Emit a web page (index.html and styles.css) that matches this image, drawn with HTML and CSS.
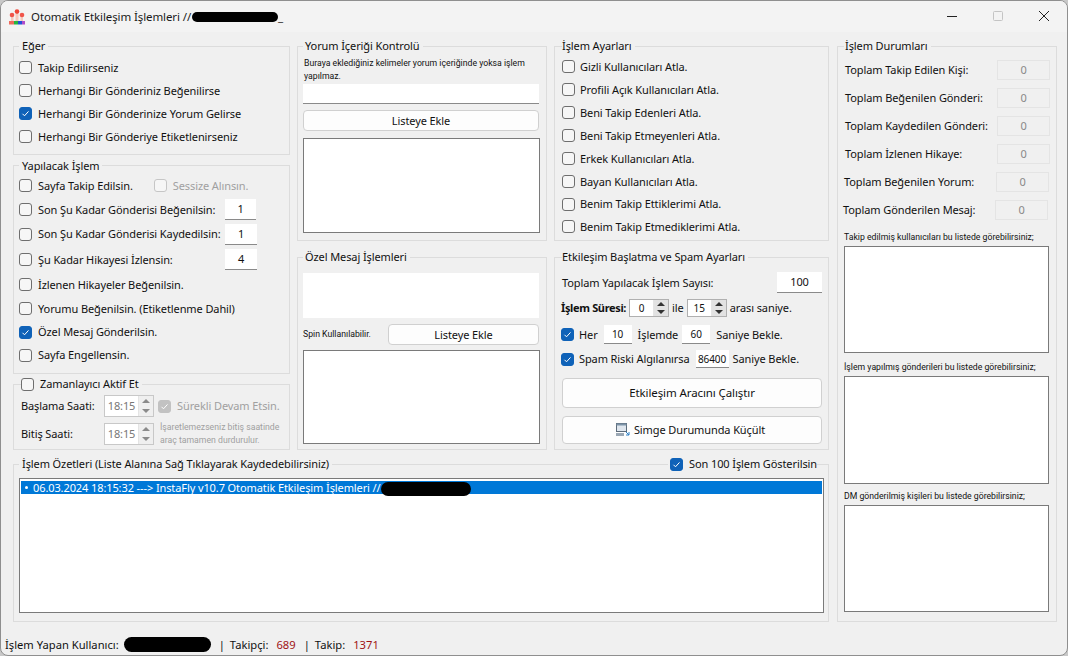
FILE: index.html
```html
<!DOCTYPE html>
<html lang="tr">
<head>
<meta charset="utf-8">
<title>Otomatik Etkileşim İşlemleri</title>
<link rel="stylesheet" href="styles.css">
</head>
<body>
<div class="window">
  <header class="titlebar">
    <svg class="logo" width="16" height="16" viewBox="0 0 16 16"><path d="M2 8h2.5v4H2zM11.5 8H14v4h-2.5zM6.5 5h3v7h-3z" fill="#f6c9bc"/><circle cx="8" cy="2.6" r="2.3" fill="#ee4638"/><circle cx="3" cy="6" r="2.3" fill="#f0554a"/><circle cx="13" cy="6" r="2.3" fill="#f0554a"/><path d="M0 12h5v3.5H0z" fill="#ef6a5c"/><path d="M5 12h4v3.5H5z" fill="#27b53f"/><path d="M9 12h4v3.5H9z" fill="#2450d8"/><path d="M13 12h3v3.5h-3z" fill="#b04bc9"/></svg>
    <span class="title-text">Otomatik Etkileşim İşlemleri //</span><span class="blot blot-title"></span><span class="title-text">_</span>
    <div class="controls">
      <svg class="ctl" width="46" height="32" viewBox="0 0 46 32"><path d="M18 15.5h10" stroke="#222" fill="none"/></svg>
      <svg class="ctl" width="46" height="32" viewBox="0 0 46 32"><rect x="18.5" y="10.5" width="9" height="9" rx="1" stroke="#c4c4c4" fill="none"/></svg>
      <svg class="ctl" width="46" height="32" viewBox="0 0 46 32"><path d="M18 10l10 10M28 10L18 20" stroke="#222" fill="none"/></svg>
    </div>
  </header>

  <main class="content">
    <section class="col">
      <fieldset class="group g-if">
        <legend>Eğer</legend>
        <div class="row h23"><span class="cb"></span>Takip Edilirseniz</div>
        <div class="row h23"><span class="cb"></span>Herhangi Bir Gönderiniz Beğenilirse</div>
        <div class="row h23"><span class="cb on"><svg viewBox="0 0 13 13"><path d="M3.5 6.8l2 2 4-4.4" fill="none" stroke="#fff"/></svg></span>Herhangi Bir Gönderinize Yorum Gelirse</div>
        <div class="row h23"><span class="cb"></span>Herhangi Bir Gönderiye Etiketlenirseniz</div>
      </fieldset>
      <fieldset class="group g-do">
        <legend>Yapılacak İşlem</legend>
        <div class="row h24"><span class="cb"></span>Sayfa Takip Edilsin.<span class="cb off quiet"></span><span class="muted">Sessize Alınsın.</span></div>
        <div class="row h24"><span class="cb"></span>Son Şu Kadar Gönderisi Beğenilsin:<span class="field n1">1</span></div>
        <div class="row h25"><span class="cb"></span>Son Şu Kadar Gönderisi Kaydedilsin:<span class="field n1 wide">1</span></div>
        <div class="row h26"><span class="cb"></span>Şu Kadar Hikayesi İzlensin:<span class="field n1 wide">4</span></div>
        <div class="row h24"><span class="cb"></span>İzlenen Hikayeler Beğenilsin.</div>
        <div class="row h24"><span class="cb"></span>Yorumu Beğenilsin. (Etiketlenme Dahil)</div>
        <div class="row h23"><span class="cb on"><svg viewBox="0 0 13 13"><path d="M3.5 6.8l2 2 4-4.4" fill="none" stroke="#fff"/></svg></span>Özel Mesaj Gönderilsin.</div>
        <div class="row h23"><span class="cb"></span>Sayfa Engellensin.</div>
      </fieldset>
      <fieldset class="group g-timer">
        <legend class="legend-check"><span class="cb"></span>Zamanlayıcı Aktif Et</legend>
        <div class="timer-row">
          <span class="timer-label">Başlama Saati:</span>
          <span class="spin time"><span class="spin-val">18:15</span><span class="arrows"><i class="up"></i><i class="down"></i></span></span>
          <span class="cb off on-off"><svg viewBox="0 0 13 13"><path d="M3.5 6.8l2 2 4-4.4" fill="none" stroke="#fff"/></svg></span><span class="muted">Sürekli Devam Etsin.</span>
        </div>
        <div class="timer-row second">
          <span class="timer-label">Bitiş Saati:</span>
          <span class="spin time"><span class="spin-val">18:15</span><span class="arrows"><i class="up"></i><i class="down"></i></span></span>
          <span class="small muted note">İşaretlemezseniz bitiş saatinde<br>araç tamamen durdurulur.</span>
        </div>
      </fieldset>
    </section>

    <section class="col">
      <fieldset class="group g-comment">
        <legend>Yorum İçeriği Kontrolü</legend>
        <p class="small hint">Buraya eklediğiniz kelimeler yorum içeriğinde yoksa işlem yapılmaz.</p>
        <div class="plain in-comment"></div>
        <button class="btn b-add">Listeye Ekle</button>
        <div class="list l-comment"></div>
      </fieldset>
      <fieldset class="group g-dm">
        <legend>Özel Mesaj İşlemleri</legend>
        <div class="plain in-dm"></div>
        <div class="dm-row"><span class="small">Spin Kullanılabilir.</span><button class="btn b-add b-dm">Listeye Ekle</button></div>
        <div class="list l-dm"></div>
      </fieldset>
    </section>

    <section class="col">
      <fieldset class="group g-settings">
        <legend>İşlem Ayarları</legend>
        <div class="row h23"><span class="cb"></span>Gizli Kullanıcıları Atla.</div>
        <div class="row h23"><span class="cb"></span>Profili Açık Kullanıcıları Atla.</div>
        <div class="row h23"><span class="cb"></span>Beni Takip Edenleri Atla.</div>
        <div class="row h23"><span class="cb"></span>Beni Takip Etmeyenleri Atla.</div>
        <div class="row h23"><span class="cb"></span>Erkek Kullanıcıları Atla.</div>
        <div class="row h23"><span class="cb"></span>Bayan Kullanıcıları Atla.</div>
        <div class="row h22"><span class="cb"></span>Benim Takip Ettiklerimi Atla.</div>
        <div class="row h23"><span class="cb"></span>Benim Takip Etmediklerimi Atla.</div>
      </fieldset>
      <fieldset class="group g-run">
        <legend>Etkileşim Başlatma ve Spam Ayarları</legend>
        <div class="line l1"><span>Toplam Yapılacak İşlem Sayısı:</span><span class="field total">100</span></div>
        <div class="line l2"><b>İşlem Süresi:</b>
          <span class="spin sec"><span class="spin-val">0</span><span class="arrows dark"><i class="up"></i><i class="down"></i></span></span>
          <span>ile</span>
          <span class="spin sec"><span class="spin-val">15</span><span class="arrows dark"><i class="up"></i><i class="down"></i></span></span>
          <span>arası saniye.</span></div>
        <div class="line l3"><span class="cb on"><svg viewBox="0 0 13 13"><path d="M3.5 6.8l2 2 4-4.4" fill="none" stroke="#fff"/></svg></span><span>Her</span><span class="field mini">10</span><span>İşlemde</span><span class="field mini">60</span><span>Saniye Bekle.</span></div>
        <div class="line l4"><span class="cb on"><svg viewBox="0 0 13 13"><path d="M3.5 6.8l2 2 4-4.4" fill="none" stroke="#fff"/></svg></span><span>Spam Riski Algılanırsa</span><span class="field mini long">86400</span><span>Saniye Bekle.</span></div>
        <button class="btn b-run">Etkileşim Aracını Çalıştır</button>
        <button class="btn b-min"><svg width="16" height="16" viewBox="0 0 16 16"><rect x="1.5" y="1.5" width="10" height="8" fill="#dfe6ee" stroke="#5c6b7a"/><rect x="1.5" y="1.5" width="10" height="2" fill="#7d93a8"/><rect x="1" y="11" width="8" height="3" fill="#9aa7b4"/><path d="M11 10l3 3M14 10v3h-3" stroke="#2c7fc4" fill="none"/></svg>Simge Durumunda Küçült</button>
      </fieldset>
    </section>

    <fieldset class="group stats">
      <legend>İşlem Durumları</legend>
      <div class="stat"><span>Toplam Takip Edilen Kişi:</span><span class="ro">0</span></div>
      <div class="stat"><span>Toplam Beğenilen Gönderi:</span><span class="ro">0</span></div>
      <div class="stat"><span>Toplam Kaydedilen Gönderi:</span><span class="ro">0</span></div>
      <div class="stat"><span>Toplam İzlenen Hikaye:</span><span class="ro">0</span></div>
      <div class="stat s5"><span>Toplam Beğenilen Yorum:</span><span class="ro">0</span></div>
      <div class="stat s6"><span>Toplam Gönderilen Mesaj:</span><span class="ro">0</span></div>
      <p class="small cap c1">Takip edilmiş kullanıcıları bu listede görebilirsiniz;</p>
      <div class="list s-l1"></div>
      <p class="small cap c2">İşlem yapılmış gönderileri bu listede görebilirsiniz;</p>
      <div class="list s-l2"></div>
      <p class="small cap c3">DM gönderilmiş kişileri bu listede görebilirsiniz;</p>
      <div class="list s-l3"></div>
    </fieldset>

    <fieldset class="group log">
      <legend>İşlem Özetleri (Liste Alanına Sağ Tıklayarak Kaydedebilirsiniz)</legend>
      <div class="log-toggle"><span class="cb on"><svg viewBox="0 0 13 13"><path d="M3.5 6.8l2 2 4-4.4" fill="none" stroke="#fff"/></svg></span>Son 100 İşlem Gösterilsin</div>
      <div class="list log-list">
        <div class="log-item"><span class="bullet"></span>06.03.2024 18:15:32 ---&gt; InstaFly v10.7 Otomatik Etkileşim İşlemleri //<span class="blot blot-log"></span></div>
      </div>
    </fieldset>
  </main>

  <footer class="status">
    <span>İşlem Yapan Kullanıcı:</span><span class="blot blot-user"></span>
    <span class="sep">|</span><span>Takipçi:</span><span class="num">689</span>
    <span class="sep">|</span><span>Takip:</span><span class="num">1371</span>
  </footer>
</div>
</body>
</html>
```
FILE: styles.css
```css
* { box-sizing: border-box; }
html, body { margin: 0; padding: 0; }
body {
  width: 1068px; height: 656px; overflow: hidden;
  background: #c8c8c8;
  font: 11px/16px "Noto Sans", sans-serif;
  letter-spacing: -0.1px;
  color: #111;
}
.window {
  width: 1068px; height: 656px;
  display: flex; flex-direction: column;
  background: #f0f0f0;
  border: 1px solid #8f8f8f;
  border-radius: 8px;
  overflow: hidden;
}
.titlebar {
  height: 31px; flex: none;
  display: flex; align-items: center;
  padding-left: 8px;
  background: #f3f3f3;
  font-size: 11.5px;
}
.logo { margin-right: 6px; }
.title-text { color: #1a1a1a; }
.controls { margin-left: auto; display: flex; }
.ctl { display: block; }

.blot { display: inline-block; background: #000; border-radius: 8px; }
.blot-title { width: 86px; height: 10px; margin-left: 1px; }
.blot-log { width: 90px; height: 14px; vertical-align: -4px; border-radius: 7px; }
.blot-user { width: 87px; height: 15px; margin-left: 5px; }

.content {
  flex: 1; min-height: 0;
  display: grid;
  grid-template-columns: 277px 250px 275px 221px;
  grid-template-rows: 412px 166px;
  column-gap: 7px;
  row-gap: 6px;
  padding: 6px 0 0 12px;
  align-content: start;
}
.col { display: flex; flex-direction: column; justify-content: space-between; }

.group {
  margin: 0; min-width: 0;
  border: 1px solid #dcdcdc;
  padding: 0 6px;
  display: flex; flex-direction: column;
}
legend { padding: 0 3px; margin-left: 0; height: 16px; line-height: 16px; color: #111; }
.g-if { height: 117px; padding-top: 2px; padding-left: 5px; }
.g-do { height: 216px; padding-left: 5px; }
.g-timer { height: 74px; padding-top: 3px; padding-left: 7px; }
.g-comment, .g-settings { height: 203px; }
.g-dm, .g-run { height: 201px; }
.g-comment, .g-dm { padding-left: 5px; padding-right: 7px; }
.g-comment legend, .g-dm legend { padding-left: 2px; }
.g-settings { padding-left: 7px; padding-top: 1px; }
.g-settings .cb { margin-right: 5px; }
.g-run { padding-left: 7px; }
.g-settings legend, .g-run legend { padding-left: 0; }

.row { display: flex; align-items: center; white-space: nowrap; }
.h22 { height: 22px; } .h23 { height: 23px; } .h24 { height: 24px; } .h25 { height: 25px; } .h26 { height: 26px; }

.cb {
  width: 13px; height: 13px; flex: none;
  display: inline-block;
  border: 1px solid #6e6e6e; border-radius: 3px;
  background: #f6f6f6;
  margin-right: 6px;
}
.cb svg { display: block; width: 13px; height: 13px; margin: -1px; }
.cb.on { background: #0f62b8; border-color: #0f62b8; }
.cb.off { border-color: #c6c6c6; }
.cb.on-off { background: #c2c2c2; border-color: #c2c2c2; margin: 0 6px 0 4px; }
.quiet { margin-left: 21px; }
.muted { color: #a0a0a0; }
.small { font: 8.7px/13px Roboto, sans-serif; letter-spacing: 0; margin: 0; }

.field {
  display: inline-flex; align-items: center; justify-content: center;
  background: #fff;
  border-bottom: 1px solid #8a8a8a;
  height: 21px;
  flex: none;
}
.n1 { width: 31px; margin-left: auto; margin-right: 27px; }
.n1.wide { width: 32px; margin-right: 26px; }
.total { width: 45px; margin-left: auto; }
.mini { height: 19px; width: 28px; font-size: 10px; }
.mini.long { height: 18px; width: 33px; }

.spin {
  display: inline-flex; align-items: stretch;
  background: #fff;
  border: 1px solid #c8c8c8;
  flex: none;
}
.spin-val { flex: 1; text-align: center; }
.arrows { width: 15px; display: flex; flex-direction: column; background: #efefef; border-left: 1px solid #e4e4e4; }
.arrows i { flex: 1; position: relative; display: block; }
.arrows i::after {
  content: ""; position: absolute; left: 3px; top: 50%; margin-top: -2px;
  border: 4px solid transparent; border-top: 0; border-bottom: 4px solid #8a8a8a;
}
.arrows i.down::after { border-bottom: 0; border-top: 4px solid #8a8a8a; }
.arrows.dark { background: #e2e2e2; }
.arrows.dark i::after { border-bottom-color: #333; }
.arrows.dark i.down::after { border-top-color: #333; }
.time { width: 50px; height: 22px; color: #777; }
.time .spin-val { line-height: 20px; }
.sec { width: 40px; height: 18px; font-size: 10px; line-height: 16px; border-color: #b0b0b0; }

.legend-check { display: flex; align-items: center; padding-left: 0; }
.timer-row { display: flex; align-items: center; height: 22px; white-space: nowrap; }
.timer-row.second { margin-top: 6px; }
.timer-label { width: 83px; flex: none; }
.note { margin-left: 6px; }

.hint { margin: 3px 0 0 1px; }
.plain { background: #fff; }
.in-comment { margin-top: 1px; height: 20px; border-bottom: 1px solid #8a8a8a; }
.in-dm { margin-top: 8px; height: 45px; }
.btn {
  font: inherit; color: #111; letter-spacing: inherit;
  background: #fdfdfd;
  border: 1px solid #d0d0d0; border-radius: 4px;
  padding: 0; display: flex; align-items: center; justify-content: center;
}
.b-add { margin-top: 6px; height: 21px; width: 236px; }
.list { background: #fff; border: 1px solid #7a7a7a; }
.l-comment { margin-top: 7px; margin-right: -1px; height: 95px; }
.dm-row { display: flex; align-items: center; justify-content: space-between; margin-top: 6px; height: 21px; }
.b-dm { margin-top: 0; width: 151px; }
.l-dm { margin-top: 5px; margin-right: -1px; height: 94px; }

.line { display: flex; align-items: center; white-space: nowrap; }
.line b { letter-spacing: -0.35px; }
.l1 { margin-top: 7px; height: 21px; }
.l2 { margin-top: 6px; height: 18px; gap: 3px; margin-left: -1px; }
.l3 { margin-top: 8px; height: 19px; margin-left: -1px; }
.l4 { margin-top: 6px; height: 18px; margin-left: -1px; }
.l3 .cb, .l4 .cb { margin-right: 5px; }
.l3 .field { margin: 0 6px; }
.l3 .field + span + .field { margin-left: 4px; }
.l4 .field { margin: 0 4px 0 6px; }
.b-run { margin-top: 10px; height: 30px; font-size: 11.5px; }
.b-min { margin-top: 8px; height: 28px; gap: 3px; padding-right: 4px; }

.stats { grid-column: 4; grid-row: 1 / 3; padding-top: 6px; padding-right: 7px; margin-left: 1px; }
.stats legend { padding-left: 1px; }
.stat { display: flex; align-items: center; justify-content: space-between; height: 20px; margin-bottom: 8px; margin-left: 1px; margin-right: -1px; white-space: nowrap; }
.s5 { margin-left: 0; margin-right: 0; }
.s6 { margin-left: -1px; margin-right: 1px; margin-bottom: 0; }
.ro { width: 53px; height: 20px; border: 1px solid #e4e4e4; display: flex; align-items: center; justify-content: center; color: #888; flex: none; }
.c1 { margin-top: 11px; }
.c2 { margin-top: 8px; }
.c3 { margin-top: 6px; }
.s-l1 { margin-top: 2px; height: 107px; }
.s-l2 { margin-top: 2px; height: 108px; }
.s-l3 { margin-top: 2px; height: 107px; }

.log { grid-column: 1 / 4; grid-row: 2; position: relative; padding: 6px 4px 0 5px; }
.log-toggle {
  position: absolute; top: -16px; right: 11px;
  display: flex; align-items: center;
  background: #f0f0f0; padding-left: 2px;
}
.log-list { height: 135px; padding: 2px 1px; }
.log-item { height: 13px; line-height: 13px; background: #0078d7; color: #fff; padding-left: 12px; position: relative; white-space: nowrap; }
.bullet { position: absolute; left: 4px; top: 5px; width: 3px; height: 3px; background: #fff; border-radius: 50%; }

.status {
  margin-top: auto; height: 21px; flex: none;
  display: flex; align-items: center;
  padding-left: 4px; white-space: nowrap;
  font-size: 11.2px; letter-spacing: 0;
}
.sep { margin: 0 5px 0 8px; }
.num { color: #a01414; margin-left: 8px; }
```
